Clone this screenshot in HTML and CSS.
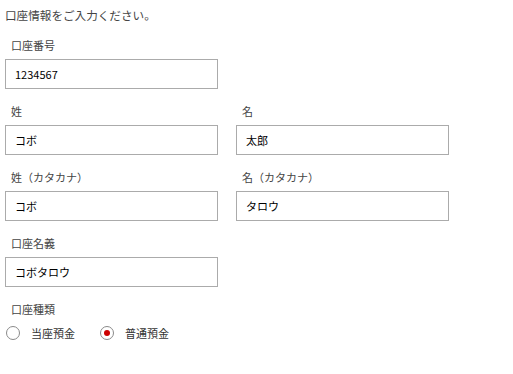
FILE: index.html
```html
<!DOCTYPE html>
<html lang="ja">
<head>
  <meta charset="utf-8" />
  <title>口座情報</title>
  <link rel="stylesheet" href="styles.css">
</head>
<body>
  <div class="container">
    <p class="lead">口座情報をご入力ください。</p>

    <div class="field">
      <label>口座番号</label>
      <input type="text" value="1234567" />
    </div>

    <div class="row">
      <div class="field">
        <label>姓</label>
        <input type="text" value="コボ" />
      </div>
      <div class="field">
        <label>名</label>
        <input type="text" value="太郎" />
      </div>
    </div>

    <div class="row">
      <div class="field">
        <label>姓（カタカナ）</label>
        <input type="text" value="コボ" />
      </div>
      <div class="field">
        <label>名（カタカナ）</label>
        <input type="text" value="タロウ" />
      </div>
    </div>

    <div class="field">
      <label>口座名義</label>
      <input type="text" value="コボタロウ" />
    </div>

    <div class="field">
      <label>口座種類</label>
      <div class="radio-group">
        <label class="radio"><input type="radio" name="kind" /> 当座預金</label>
        <label class="radio"><input type="radio" name="kind" checked /> 普通預金</label>
      </div>
    </div>
  </div>
</body>
</html>
```

FILE: styles.css
```css
* {
    padding: 0;
    margin: 0;
    box-sizing: border-box;
    font-family: "Noto Sans CJK JP", "Noto Sans", sans-serif;
}

body {
    background-color: #ffffff;
    color: #333333;
}

.container {
    padding: 6px 0 0 5px;
}

.lead {
    font-size: 11.6px;
    line-height: 18px;
    color: #444444;
    margin-bottom: 13px;
}

.row {
    display: flex;
    gap: 18px;
}

.field {
    margin-bottom: 14px;
}

.field > label {
    display: block;
    padding-left: 6px;
    font-size: 11px;
    line-height: 16px;
    margin-bottom: 6px;
    color: #444444;
}

.field input[type="text"] {
    display: block;
    width: 213px;
    height: 30px;
    border: 1px solid #ababab;
    padding: 0 9px;
    font-size: 11px;
    color: #000000;
    background: #ffffff;
}

.radio-group {
    display: flex;
    gap: 25px;
    height: 20px;
    align-items: center;
    padding-left: 1px;
}

.radio {
    display: flex;
    align-items: center;
    gap: 11px;
    font-size: 11px;
    color: #333333;
}

.radio input {
    appearance: none;
    width: 14px;
    height: 14px;
    border: 1px solid #8a8a8a;
    border-radius: 50%;
    background: #ffffff;
    position: relative;
}

.radio input:checked::after {
    content: "";
    position: absolute;
    left: 3px;
    top: 3px;
    width: 6px;
    height: 6px;
    border-radius: 50%;
    background: #cc0000;
}
```
